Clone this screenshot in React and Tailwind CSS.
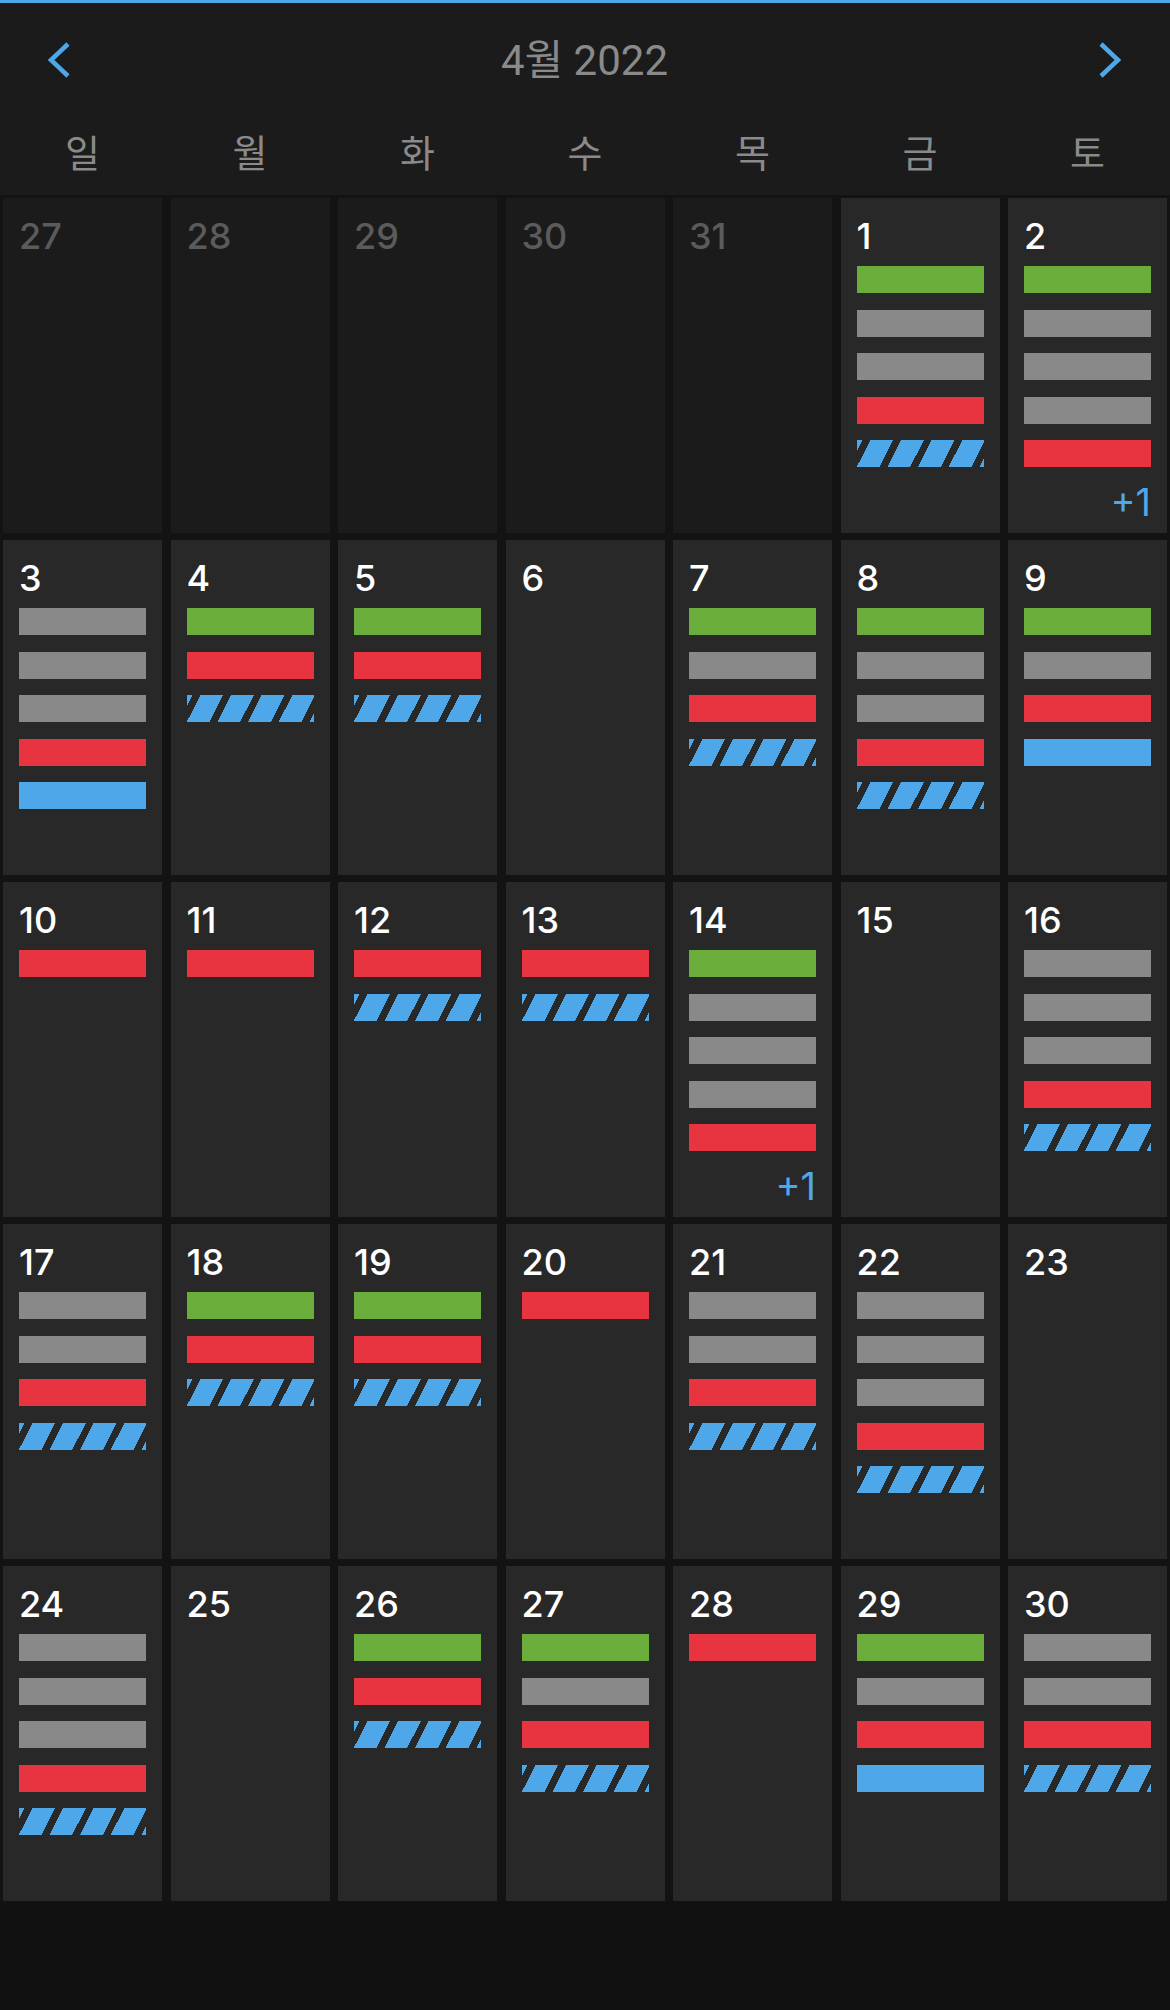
import React from 'react';

const weekDays = ['일', '월', '화', '수', '목', '금', '토'];

// g = green, s = gray, r = red, b = blue, h = blue hatched
const weeks = [
  [
    { day: 27, prev: true }, { day: 28, prev: true }, { day: 29, prev: true },
    { day: 30, prev: true }, { day: 31, prev: true },
    { day: 1, events: 'gssrh' },
    { day: 2, events: 'gsssr', more: 1 },
  ],
  [
    { day: 3, events: 'sssrb' }, { day: 4, events: 'grh' }, { day: 5, events: 'grh' },
    { day: 6, events: '' }, { day: 7, events: 'gsrh' }, { day: 8, events: 'gssrh' },
    { day: 9, events: 'gsrb' },
  ],
  [
    { day: 10, events: 'r' }, { day: 11, events: 'r' }, { day: 12, events: 'rh' },
    { day: 13, events: 'rh' }, { day: 14, events: 'gsssr', more: 1 }, { day: 15, events: '' },
    { day: 16, events: 'sssrh' },
  ],
  [
    { day: 17, events: 'ssrh' }, { day: 18, events: 'grh' }, { day: 19, events: 'grh' },
    { day: 20, events: 'r' }, { day: 21, events: 'ssrh' }, { day: 22, events: 'sssrh' },
    { day: 23, events: '' },
  ],
  [
    { day: 24, events: 'sssrh' }, { day: 25, events: '' }, { day: 26, events: 'grh' },
    { day: 27, events: 'gsrh' }, { day: 28, events: 'r' }, { day: 29, events: 'gsrb' },
    { day: 30, events: 'ssrh' },
  ],
];

const barClass = {
  g: 'bg-[#6aad3a]',
  s: 'bg-[#898989]',
  r: 'bg-[#e83340]',
  b: 'bg-[#4ea7e8]',
  h: 'bg-[repeating-linear-gradient(117deg,#4ea7e8_0px,#4ea7e8_5px,#282828_5px,#282828_12px,#4ea7e8_12px,#4ea7e8_27.3px)]',
};

const Chevron = ({ dir }) => (
  <svg width="26" height="38" viewBox="0 0 26 38" fill="none">
    <path
      d={dir === 'left' ? 'M22 3 L5 19 L22 35' : 'M4 3 L21 19 L4 35'}
      stroke="#4ea7e8"
      strokeWidth="4.5"
      strokeLinecap="butt"
    />
  </svg>
);

const DayCell = ({ cell }) => {
  if (cell.prev) {
    return (
      <div className="h-[335px] bg-[#1b1b1b] px-4 pt-5">
        <div className="text-[36px] leading-9 font-medium text-[#5b5b5b]">{cell.day}</div>
      </div>
    );
  }
  return (
    <div className="h-[335px] bg-[#282828] px-4 pt-5">
      <div className="text-[36px] leading-9 font-medium text-white">{cell.day}</div>
      <div className="mt-3 flex flex-col gap-[16.5px]">
        {cell.events.split('').map((e, i) => (
          <div key={i} className={`h-[27px] ${barClass[e]}`} />
        ))}
        {cell.more && (
          <div className="text-right text-[38px] leading-9 font-normal text-[#4ea7e8]">+{cell.more}</div>
        )}
      </div>
    </div>
  );
};

export default function App() {
  return (
    <div className="min-h-screen bg-[#111111] font-['Inter','Noto_Sans_CJK_KR',sans-serif]">
      <div className="border-t-[3px] border-[#4ea7e8] bg-[#1b1b1b]">
        <div className="h-[114px] flex items-center justify-between pl-[46px] pr-[47px]">
          <Chevron dir="left" />
          <div className="text-[42px] text-[#8a8a8a] font-['Roboto','Noto_Sans_CJK_KR',sans-serif]">4월 2022</div>
          <Chevron dir="right" />
        </div>
        <div className="grid grid-cols-7 gap-x-[8.5px] px-[3px] h-[78px] pb-[12px]">
          {weekDays.map((d) => (
            <div key={d} className="flex items-center justify-center text-[38px] text-[#8a8a8a] font-['Noto_Sans_CJK_KR',sans-serif]">
              {d}
            </div>
          ))}
        </div>
      </div>
      <div className="bg-[#131313] px-[3px] pt-[3px] grid grid-cols-7 gap-x-[8.5px] gap-y-[7px]">
        {weeks.flat().map((cell, i) => (
          <DayCell key={i} cell={cell} />
        ))}
      </div>
    </div>
  );
}
